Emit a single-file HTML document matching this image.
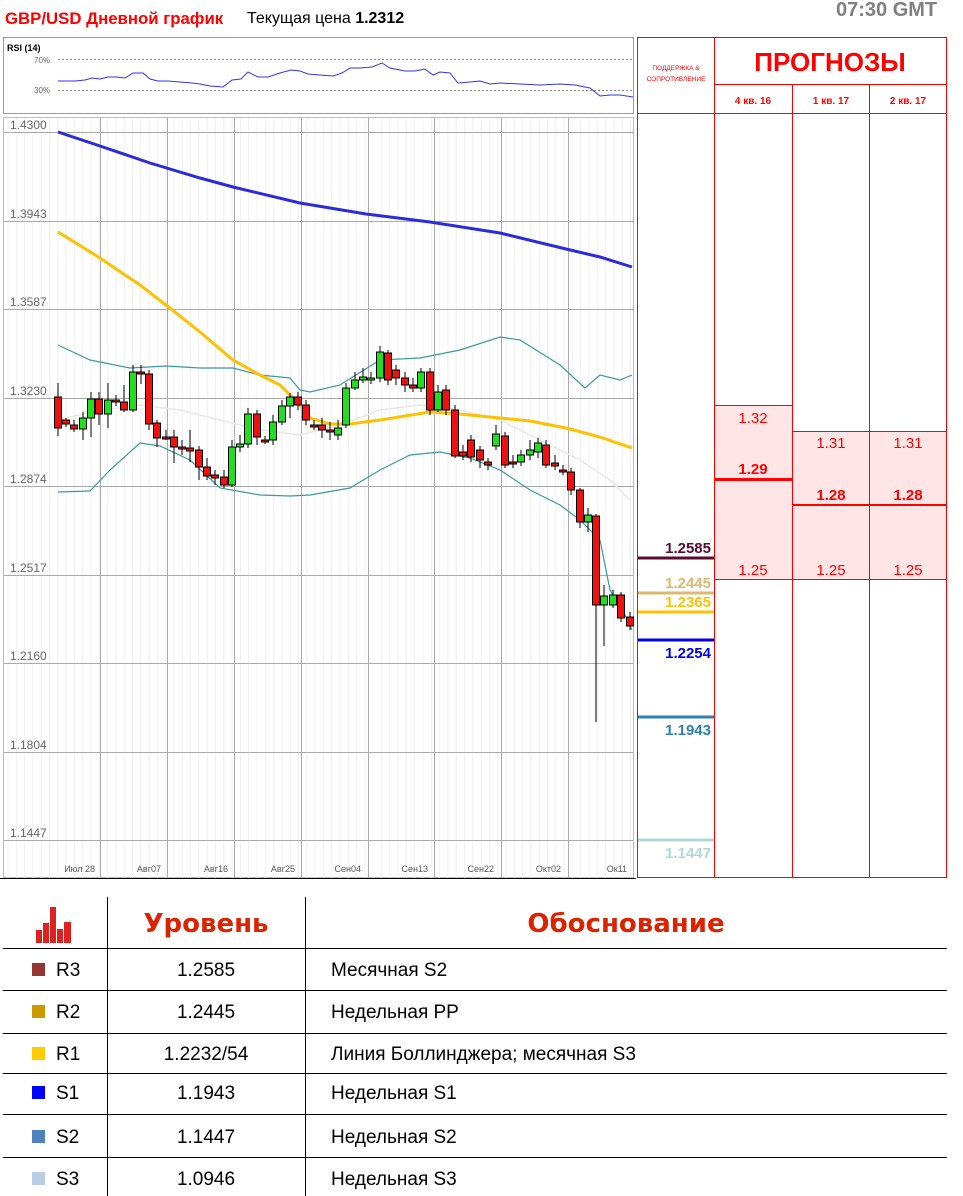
<!DOCTYPE html>
<html><head><meta charset="utf-8">
<style>
body{margin:0;width:963px;height:1196px;background:#fff;position:relative;overflow:hidden;font-family:"Liberation Sans","DejaVu Sans",sans-serif}
.a{position:absolute}
</style></head><body>
<div class="a" style="left:5px;top:9px;font-size:16.8px;font-weight:bold;color:#f00">GBP/USD Дневной график</div>
<div class="a" style="left:247px;top:10px;font-size:16px;color:#000">Текущая цена <b>1.2312</b></div>
<div class="a" style="left:836px;top:-1px;font-size:20px;font-weight:bold;color:#808080">07:30 GMT</div>

<svg class="a" style="left:0;top:0" width="963" height="900" id="ch" font-family="Liberation Sans, sans-serif">
<rect x="3.5" y="37.5" width="630" height="76" fill="#fff" stroke="#999"/>
<text x="7" y="51" font-size="9" font-weight="bold">RSI (14)</text>
<text x="34" y="63" font-size="8" fill="#666">70%</text>
<text x="34" y="93" font-size="8" fill="#666">30%</text>
<line x1="58" y1="59.5" x2="633" y2="59.5" stroke="#888" stroke-dasharray="2,2"/>
<line x1="58" y1="90.5" x2="633" y2="90.5" stroke="#888" stroke-dasharray="2,2"/>
<polyline fill="none" stroke="#3333ee" stroke-width="1" points="58,81 75,81 85,80 92,78 100,79 108,77 117,77 125,78 133,73 143,73 150,79 158,81 168,81 180,82 192,83 200,84 210,86 223,87 232,80 241,79 248,72 258,77 268,77 280,73 291,70 300,71 308,74 320,75 333,76 342,73 350,68 360,68 372,67 382,63 390,68 405,71 415,71 425,69 433,75 440,72 450,73 458,83 470,82 480,81 490,84 500,83 520,84 540,85 560,84 575,85 590,88 600,96 610,95 620,95 633,97"/>
<rect x="3.5" y="117.5" width="630" height="760" fill="#fff" stroke="#bbb"/>
<g id="minor"></g>
<g stroke="#aaa" stroke-width="1" id="grid"></g>
<g font-size="12" fill="#666" id="ylab"></g>
<g font-size="9" fill="#555" id="xlab"></g>
<line x1="0" y1="878.5" x2="636" y2="878.5" stroke="#000"/>
<polyline fill="none" stroke="#e8e8e8" stroke-width="1.5" points="58,420 100,410 140,405 180,410 220,420 260,430 300,435 340,425 380,410 420,405 460,410 500,420 540,440 580,460 610,480 630,500"/>
<polyline fill="none" stroke="#3a9a9a" stroke-width="1.2" points="58,345 90,360 130,368 166,366 200,368 233,368 260,375 290,378 300,390 310,392 340,385 380,360 420,358 460,350 500,337 520,340 560,365 585,388 600,375 620,380 632,375"/>
<polyline fill="none" stroke="#3a9a9a" stroke-width="1.2" points="58,492 90,491 110,470 140,443 160,446 190,460 220,488 260,495 290,496 310,495 350,488 380,470 410,455 440,452 470,458 500,470 530,490 560,505 580,520 600,540 610,590 625,615 632,630"/>
<polyline fill="none" stroke="#2b2bdd" stroke-width="3" points="58,132 100,146 150,163 200,178 233,187 300,203 366,214 430,222 500,233 566,249 600,257 632,267"/>
<polyline fill="none" stroke="#ffc000" stroke-width="3" points="58,232 100,258 140,285 166,305 200,332 233,360 260,375 280,385 300,405 310,418 330,424 350,424 380,420 430,412 460,414 500,418 530,421 566,428 600,437 632,448"/>
<g id="candles"></g>
</svg>

<svg class="a" style="left:0;top:0" width="963" height="890" font-family="Liberation Sans, sans-serif">
<rect x="715" y="405" width="77" height="174" fill="#ffe5e5"/>
<rect x="792" y="431" width="155" height="148" fill="#ffe5e5"/>
<g stroke="#f00" stroke-width="1">
<rect x="637.5" y="37.5" width="309" height="840" fill="none"/>
<line x1="714.5" y1="37" x2="714.5" y2="878"/>
<line x1="792.5" y1="84" x2="792.5" y2="878"/>
<line x1="869.5" y1="84" x2="869.5" y2="878"/>
<line x1="714" y1="84.5" x2="947" y2="84.5"/>
<line x1="637" y1="113.5" x2="947" y2="113.5"/>
<line x1="714" y1="405.5" x2="792" y2="405.5"/>
<line x1="792" y1="431.5" x2="947" y2="431.5"/>
<line x1="714" y1="579.5" x2="947" y2="579.5"/>
<line x1="792" y1="505" x2="947" y2="505" stroke-width="2"/>
<line x1="714" y1="479.5" x2="792" y2="479.5" stroke-width="3"/>
</g>
<text x="676" y="70" font-size="6.5" fill="#f00" text-anchor="middle">ПОДДЕРЖКА &amp;</text>
<text x="676" y="81" font-size="6.5" fill="#f00" text-anchor="middle">СОПРОТИВЛЕНИЕ</text>
<text x="830" y="71" font-size="26" font-weight="bold" fill="#f00" text-anchor="middle">ПРОГНОЗЫ</text>
<g font-size="10" font-weight="bold" fill="#f00" text-anchor="middle">
<text x="753" y="104">4 кв. 16</text><text x="831" y="104">1 кв. 17</text><text x="908" y="104">2 кв. 17</text></g>
<g font-size="15" fill="#f00" text-anchor="middle">
<text x="753" y="423">1.32</text><text x="831" y="448">1.31</text><text x="908" y="448">1.31</text>
<text x="753" y="575">1.25</text><text x="831" y="575">1.25</text><text x="908" y="575">1.25</text>
<text x="753" y="474" font-weight="bold">1.29</text><text x="831" y="500" font-weight="bold">1.28</text><text x="908" y="500" font-weight="bold">1.28</text></g>
<g font-size="15" font-weight="bold" text-anchor="end">
<line x1="638" y1="558" x2="714" y2="558" stroke="#5a0a30" stroke-width="3"/><text x="711" y="553" fill="#5a0a30">1.2585</text>
<line x1="638" y1="593" x2="714" y2="593" stroke="#dbb870" stroke-width="3"/><text x="711" y="588" fill="#dbb870">1.2445</text>
<line x1="638" y1="612" x2="714" y2="612" stroke="#ffc000" stroke-width="3"/><text x="711" y="607" fill="#ffc000">1.2365</text>
<line x1="638" y1="640" x2="714" y2="640" stroke="#0000ee" stroke-width="3"/><text x="711" y="658" fill="#0000ee">1.2254</text>
<line x1="638" y1="717" x2="714" y2="717" stroke="#2f7fb0" stroke-width="3"/><text x="711" y="735" fill="#2f7fb0">1.1943</text>
<line x1="638" y1="840" x2="714" y2="840" stroke="#b0d8d8" stroke-width="3"/><text x="711" y="858" fill="#b0d8d8">1.1447</text>
</g>
</svg>

<svg class="a" style="left:0;top:880px" width="963" height="316" font-family="Liberation Sans, sans-serif">
<g stroke="#000" stroke-width="1">
<line x1="107.5" y1="17" x2="107.5" y2="316"/><line x1="305.5" y1="17" x2="305.5" y2="316"/>
<line x1="3" y1="68.5" x2="947" y2="68.5"/><line x1="3" y1="110.5" x2="947" y2="110.5"/>
<line x1="3" y1="153.5" x2="947" y2="153.5"/><line x1="3" y1="193.5" x2="947" y2="193.5"/>
<line x1="3" y1="234.5" x2="947" y2="234.5"/><line x1="3" y1="277.5" x2="947" y2="277.5"/>
</g>
<g fill="#dd2222"><rect x="36" y="50" width="6" height="13"/><rect x="43" y="43" width="6" height="20"/><rect x="50" y="27" width="6" height="36"/><rect x="57" y="49" width="6" height="14"/><rect x="64" y="42" width="7" height="21"/></g>
<text x="206" y="52" font-size="26" font-weight="bold" fill="#dd2200" text-anchor="middle" font-family="DejaVu Sans, sans-serif">Уровень</text>
<text x="626" y="52" font-size="26" font-weight="bold" fill="#dd2200" text-anchor="middle" font-family="DejaVu Sans, sans-serif">Обоснование</text>
<g font-size="19" fill="#000">
<rect x="32" y="83" width="13" height="13" fill="#943634"/><text x="56" y="96">R3</text><text x="206" y="96" text-anchor="middle">1.2585</text><text x="331" y="96">Месячная S2</text>
<rect x="32" y="125" width="13" height="13" fill="#cc9900"/><text x="56" y="138">R2</text><text x="206" y="138" text-anchor="middle">1.2445</text><text x="331" y="138">Недельная PP</text>
<rect x="32" y="167" width="13" height="13" fill="#ffcc00"/><text x="56" y="180">R1</text><text x="206" y="180" text-anchor="middle">1.2232/54</text><text x="331" y="180">Линия Боллинджера; месячная S3</text>
<rect x="32" y="206" width="13" height="13" fill="#0000ff"/><text x="56" y="219">S1</text><text x="206" y="219" text-anchor="middle">1.1943</text><text x="331" y="219">Недельная S1</text>
<rect x="32" y="250" width="13" height="13" fill="#4f81bd"/><text x="56" y="263">S2</text><text x="206" y="263" text-anchor="middle">1.1447</text><text x="331" y="263">Недельная S2</text>
<rect x="32" y="292" width="13" height="13" fill="#b8cce4"/><text x="56" y="305">S3</text><text x="206" y="305" text-anchor="middle">1.0946</text><text x="331" y="305">Недельная S3</text>
</g>
</svg>

<script>
var NS="http://www.w3.org/2000/svg";
function el(p,t,a,txt){var e=document.createElementNS(NS,t);for(var k in a)e.setAttribute(k,a[k]);if(txt)e.textContent=txt;document.getElementById(p).appendChild(e);}
var ys=[132,221,309,398,486,575,663,752,840],labs=["1.4300","1.3943","1.3587","1.3230","1.2874","1.2517","1.2160","1.1804","1.1447"];
for(var i=0;i<ys.length;i++){el("grid","line",{x1:4,x2:633,y1:ys[i]+.5,y2:ys[i]+.5});el("ylab","text",{x:10,y:ys[i]-3},labs[i]);}
var xs=[100,167,234,301,368,434,501,568];
for(var x=8;x<633;x+=8.3)el("minor","line",{x1:x,x2:x,y1:118,y2:878,stroke:"#f0f0f0"});
xs.forEach(function(x){el("grid","line",{x1:x+.5,x2:x+.5,y1:118,y2:878});});
var xl=[["Июл 28",95],["Авг07",161],["Авг16",228],["Авг25",295],["Сен04",361],["Сен13",428],["Сен22",494],["Окт02",561],["Ок11",627]];
xl.forEach(function(a){el("xlab","text",{x:a[1],y:872,"text-anchor":"end"},a[0]);});
var c=[[58,397,428,383,436],[66,420,424,418,427],[74,425,429,420,432],[83,429,418,412,440],[91,418,399,392,437],[99,399,414,392,425],[108,414,400,383,428],[116,400,402,395,406],[124,402,410,385,412],[133,410,372,365,412],[141,372,374,365,384],[149,374,424,370,430],[157,423,438,420,447],[166,437,437,430,440],[174,437,447,430,463],[182,447,449,440,455],[190,448,451,430,462],[199,450,467,446,480],[207,467,476,458,480],[215,475,478,470,485],[224,477,485,470,488],[232,485,447,440,487],[240,447,444,435,452],[248,444,414,408,448],[257,414,437,410,445],[265,440,440,436,444],[273,440,422,415,445],[282,422,406,400,425],[290,406,397,393,418],[298,397,405,392,410],[306,405,420,400,425],[314,425,425,420,430],[322,425,430,418,438],[330,430,430,422,440],[338,435,428,420,440],[346,425,388,383,428],[355,388,380,372,390],[363,380,377,368,383],[371,380,378,372,384],[380,378,352,346,382],[388,353,380,350,385],[396,370,378,365,385],[405,378,385,372,392],[413,385,388,378,392],[421,388,372,368,392],[430,372,410,368,415],[438,410,392,385,412],[446,390,410,385,415],[455,410,456,405,458],[463,452,456,445,460],[471,440,457,435,462],[480,450,460,446,468],[488,462,465,458,470],[496,446,434,425,450],[505,436,465,432,468],[513,462,462,455,468],[521,462,455,450,466],[530,455,450,440,460],[538,452,443,438,458],[546,445,465,440,468],[555,463,466,455,470],[563,470,470,465,475],[571,472,490,468,495],[580,490,522,488,528],[588,522,515,508,532],[596,516,605,514,722],[604,605,596,585,646],[613,605,595,590,608],[621,595,618,592,622],[630,617,626,612,630]];
c.forEach(function(d){var x=d[0],o=d[1],cl=d[2];el("candles","line",{x1:x,x2:x,y1:d[3],y2:d[4],stroke:"#000"});
var t=Math.min(o,cl),h=Math.max(Math.abs(o-cl),2);el("candles","rect",{x:x-3.5,y:t,width:7,height:h,fill:cl<o?"#22dd22":"#ee1111",stroke:"#000","stroke-width":1});});
</script>
</body></html>
